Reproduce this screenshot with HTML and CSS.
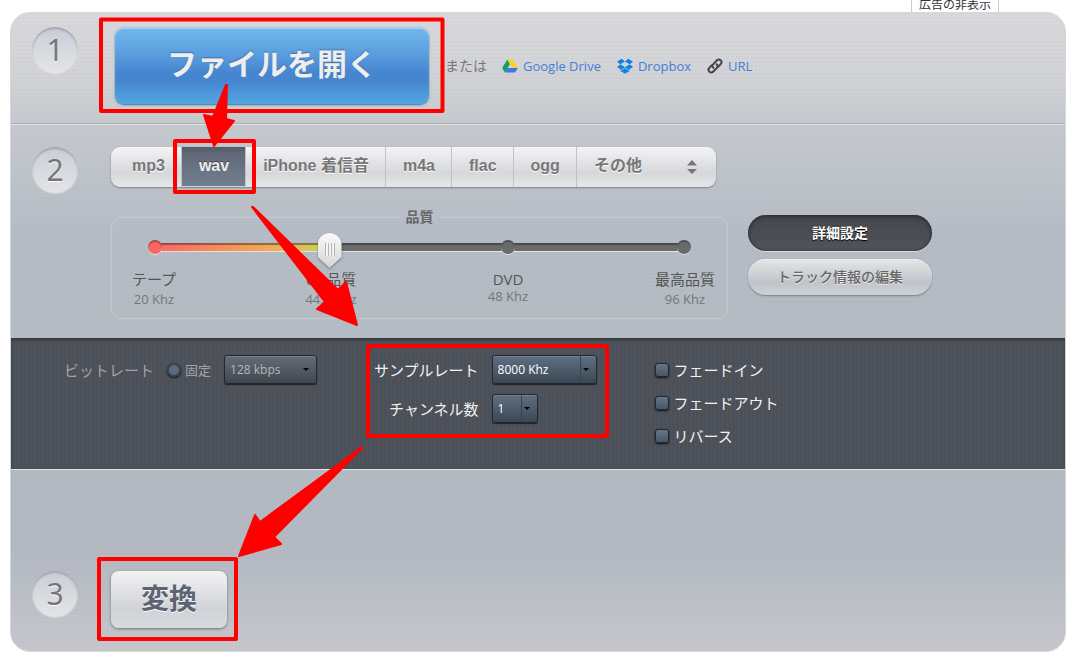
FILE: index.html
```html
<!DOCTYPE html>
<html lang="ja">
  <head>
    <meta charset="UTF-8" />
    <meta name="viewport" content="width=device-width, initial-scale=1.0" />
    <title>オーディオコンバーター</title>
    <link rel="stylesheet" href="styles.css">
  </head>

  <body>
    <header class="top">
      <a class="hide-ads" href="#">広告の非表示</a>
    </header>

    <main class="panel">
      <!-- Step 1: source file -->
      <section class="step step-open">
        <span class="number">1</span>
        <button class="open-btn" type="button">ファイルを開く</button>
        <span class="or">または</span>
        <nav class="sources">
          <a href="#">
            <svg width="16" height="16" viewBox="0 0 16 16">
              <path fill="#11a15b" d="M5.3 1.5 8 6 2.8 14.5.2 10z" />
              <path fill="#ffcf25" d="M5.3 1.5h5.4l5 8.5h-5.2z" />
              <path fill="#3b77e8" d="M5.4 10h10.4l-2.6 4.5H2.8z" />
            </svg>
            Google Drive
          </a>
          <a href="#">
            <svg width="16" height="16" viewBox="0 0 16 16" fill="#1081e2">
              <path d="M4.7.8 8 3.4 3.3 6.3 0 3.7zM11.3.8 16 3.7l-3.3 2.6L8 3.4zM0 8.9l3.3-2.6L8 9.2l-3.3 2.7zM12.7 6.3 16 8.9l-4.7 3L8 9.2zM8 10l3.3 2.7 1.4-.9v1.1L8 15.7l-4.7-2.8v-1.1l1.4.9z" />
            </svg>
            Dropbox
          </a>
          <a href="#">
            <svg width="16" height="16" viewBox="0 0 16 16" fill="none" stroke="#444" stroke-width="2" stroke-linecap="round">
              <path d="M6.4 9.8C5 8.6 5.3 7.1 6.3 6.1L9.7 2.5c2.6-2.5 6.4.9 4 3.700l-2.500 2.600" />
              <path d="M9.6 6.2c1.400 1.200 1.300 2.700.2 3.800l-3.500 3.500c-2.600 2.500-6.400-.9-4-3.700l2.500-2.600" />
            </svg>
            URL
          </a>
        </nav>
      </section>

      <!-- Step 2: format and quality -->
      <section class="step step-format">
        <span class="number">2</span>
        <div class="format">
          <div class="tabs">
            <button type="button">mp3</button>
            <button type="button" class="active">wav</button>
            <button type="button">iPhone 着信音</button>
            <button type="button">m4a</button>
            <button type="button">flac</button>
            <button type="button">ogg</button>
            <span class="more">
              <select aria-label="その他の形式">
                <option>その他</option>
              </select>
              <svg width="12" height="16" viewBox="0 0 12 16" fill="#777">
                <path d="M6 1l5 5.500H1zM6 15l5-5H1z" />
              </svg>
            </span>
          </div>

          <div class="options">
            <fieldset class="quality">
              <legend>品質</legend>
              <div class="slider">
                <div class="track"></div>
                <div class="dots">
                  <i class="dot dot-on"></i>
                  <i class="dot"></i>
                  <i class="dot"></i>
                  <i class="dot"></i>
                </div>
                <input type="range" min="0" max="100" value="33" aria-label="品質" />
              </div>
              <div class="marks">
                <div>テープ<small>20 Khz</small></div>
                <div>CD品質<small>44.1 Khz</small></div>
                <div class="short">DVD<small>48 Khz</small></div>
                <div>最高品質<small>96 Khz</small></div>
              </div>
            </fieldset>
            <div class="side">
              <button type="button" class="pill pill-on">詳細設定</button>
              <button type="button" class="pill">トラック情報の編集</button>
            </div>
          </div>
        </div>
      </section>

      <!-- Advanced settings -->
      <section class="advanced">
        <div class="bitrate">
          <span class="caption">ビットレート</span>
          <label class="fixed"><input type="radio" name="bitrate" disabled />固定</label>
          <span class="dropdown dropdown-off">
            <select aria-label="ビットレート" disabled>
              <option>128 kbps</option>
            </select>
          </span>
        </div>
        <div class="sampling">
          <label for="rate">サンプルレート</label>
          <span class="dropdown dropdown-wide">
            <select id="rate">
              <option>8000 Khz</option>
            </select>
          </span>
          <label for="channels">チャンネル数</label>
          <span class="dropdown dropdown-small">
            <select id="channels">
              <option>1</option>
            </select>
          </span>
        </div>
        <div class="effects">
          <label><input type="checkbox" />フェードイン</label>
          <label><input type="checkbox" />フェードアウト</label>
          <label><input type="checkbox" />リバース</label>
        </div>
      </section>

      <!-- Step 3: convert -->
      <section class="step step-convert">
        <span class="number">3</span>
        <button class="convert-btn" type="button">変換</button>
      </section>
    </main>

    <!-- Red guide frames and arrows -->
    <svg class="guide" width="1074" height="658" viewBox="0 0 1074 658">
      <g fill="none" stroke="#f00" stroke-width="4" stroke-linejoin="round">
        <rect x="101" y="19.5" width="341.5" height="91.5" />
        <rect x="175" y="141" width="79" height="51" />
        <rect x="368" y="346" width="239" height="90" />
        <rect x="99" y="559" width="137" height="80" />
      </g>
      <g fill="#f00" stroke="#f00" stroke-width="2" stroke-linejoin="round">
        <path d="M226 85l1 0-1 34 8 2-20 25-10-31 9 2z" />
        <path d="M252 207l1 0 85 83 8-8 11 43-40-16 8-7z" />
        <path d="M362 447l0 1-88 89 7 7-42 12 16-41 5 7z" />
      </g>
    </svg>
  </body>
</html>
```

FILE: styles.css
```css
*,
*::before,
*::after {
  box-sizing: border-box;
}

body {
  position: relative;
  margin: 0;
  background: #fff;
  color: #555;
  font-family: "Open Sans", "Noto Sans CJK JP", sans-serif;
  font-size: 15px;
}

button,
select,
input {
  margin: 0;
  font: inherit;
  cursor: pointer;
}

a {
  text-decoration: none;
}

.top {
  display: flex;
  justify-content: flex-end;
  align-items: flex-end;
  height: 12px;
  padding-right: 75px;
}

.hide-ads {
  padding: 0 7px;
  border: 1px solid #ccc;
  border-bottom: none;
  color: #333;
  font-size: 12px;
  line-height: 14px;
}

.panel {
  margin: 0 8px 6px 10px;
  border: 1px solid #d5d7da;
  border-radius: 20px;
  overflow: hidden;
  background:
    radial-gradient(circle at 1px 1px, rgba(80, 90, 110, 0.03) 1px, transparent 1px) 0 0 / 4px 4px,
    linear-gradient(#d9d9db 0, #d2d3d6 60px, #c5c9ce 115px, #b6bcc5 220px, #b3bbc2 400px, #b4b9c2 540px, #c5c7cb 100%);
}

.step {
  display: flex;
  align-items: flex-start;
  padding: 0 21px;
}

.number {
  flex: none;
  width: 46px;
  height: 46px;
  margin-right: 33px;
  border-radius: 50%;
  background: linear-gradient(#c9cdd6, #e4e5e7);
  box-shadow: inset 0 2px 2px rgba(90, 95, 105, 0.35), 0 1px 0 rgba(255, 255, 255, 0.4);
  color: #777;
  font-family: "Noto Sans", sans-serif;
  font-size: 30px;
  line-height: 46px;
  text-align: center;
  text-shadow: 0 1px 0 #fff;
}

/* step 1 */
.step-open {
  padding-top: 14px;
  padding-bottom: 19px;
  border-bottom: 1px solid #a9adb1;
}

.open-btn {
  width: 314px;
  height: 77px;
  margin-left: 4px;
  padding: 0 6px 8px;
  border: none;
  border-radius: 9px;
  background: linear-gradient(#72b8ec, #589bdd 38%, #4685d0 60%, #4685d0 70%, #53a6e0);
  box-shadow: inset 0 2px 1px rgba(255, 255, 255, 0.35), 0 1px 2px #3b6ea8;
  color: #eee;
  font-size: 30px;
  font-weight: bold;
  text-shadow: 0 -1px 1px #4a6f9c;
}

.or,
.sources {
  align-self: center;
}

.or {
  margin: 0 15px 0 16px;
  color: #777;
  font-size: 14px;
  line-height: 16px;
}

.sources {
  display: flex;
  gap: 16px;
  font-size: 13px;
}

.sources a {
  display: flex;
  align-items: center;
  gap: 5px;
  color: #4380d3;
}

/* step 2 */
.step-format {
  padding-top: 22px;
  padding-bottom: 19px;
  border-top: 1px solid #e2e4e7;
}

.format {
  flex: 1;
}

.tabs {
  display: flex;
  width: 605px;
  height: 40px;
  border-radius: 9px;
  overflow: hidden;
  background: linear-gradient(#f4f4f5, #d6d7da 65%, #e6e7e9);
  box-shadow: 0 1px 2px #7d8289;
  color: #777;
  font-family: "Liberation Sans", "Noto Sans CJK JP", sans-serif;
  font-size: 16px;
  font-weight: bold;
}

.tabs button {
  padding: 0 16px 3px 17px;
  border: none;
  border-right: 1px solid #bfc1c5;
  background: none;
  color: inherit;
  line-height: 20px;
  white-space: nowrap;
  text-shadow: 0 1px 0 #fff;
}

.tabs button:first-child {
  padding-left: 21px;
}

.tabs .active {
  background: linear-gradient(#555c68, #626978 20%, #728092);
  box-shadow: inset 0 -1px 0 #d0d4d8;
  color: #eee;
  text-shadow: 0 -1px 0 #444;
}

.more {
  display: flex;
  flex: 1;
  align-items: center;
  padding-right: 18px;
}

.more select {
  flex: 1;
  height: 40px;
  padding: 0 17px 4px;
  border: none;
  appearance: none;
  background: none;
  color: inherit;
  text-shadow: 0 1px 0 #fff;
}

.options {
  display: flex;
  margin-top: 21px;
}

.quality {
  flex: 0 1 617px;
  height: 111px;
  min-width: 0;
  margin: 0;
  padding: 3px 2px 0;
  border: 1px solid #c6cacf;
  border-radius: 10px;
}

.quality legend {
  margin: 0 auto;
  padding: 0 6px;
  color: #666;
  font-size: 14px;
  font-weight: bold;
  line-height: 18px;
}

.slider {
  position: relative;
  height: 40px;
  margin: 0 29px;
  padding: 14px 12px 0;
}

.track {
  height: 8px;
  background: linear-gradient(to right, #fb6860, #f5a556 20%, #cdd559 33%, #6b6b6b 33%);
  box-shadow: inset 0 2px 1px rgba(40, 40, 40, 0.5), 0 1px 0 #dfe1e3;
}

.dots {
  position: absolute;
  top: 11px;
  right: 5px;
  left: 5px;
  display: flex;
  justify-content: space-between;
}

.dot {
  width: 14px;
  height: 14px;
  border-radius: 50%;
  background: #6b6b6b;
  box-shadow: inset 0 2px 1px rgba(40, 40, 40, 0.4), 0 1px 0 #dfe1e3;
}

.dot-on {
  background: #fc6561;
}

.slider input {
  position: absolute;
  top: 4px;
  left: 0;
  width: 100%;
  height: 35px;
  appearance: none;
  background: none;
  filter: drop-shadow(0 1px 1px rgba(0, 0, 0, 0.4));
}

.slider input::-webkit-slider-thumb {
  appearance: none;
  width: 24px;
  height: 35px;
  background:
    repeating-linear-gradient(to right, #b5b5b5 0, #b5b5b5 1px, #f4f4f4 1px, #f4f4f4 3px) 7px 10px / 10px 13px no-repeat,
    linear-gradient(#fafafa, #d5d5d5);
  clip-path: path("M0 12a12 12 0 0 1 24 0v12L12 35 0 24z");
}

.marks {
  display: flex;
  justify-content: space-between;
  line-height: 20px;
  text-align: center;
}

.marks div {
  width: 80px;
}

.marks small {
  display: block;
  color: #777;
  font-size: 13px;
}

.marks .short small {
  line-height: 14px;
}

.side {
  display: flex;
  flex-direction: column;
  gap: 8px;
  padding-top: 7px;
  margin-left: 20px;
}

.pill {
  width: 184px;
  height: 36px;
  padding: 0 0 3px;
  border: none;
  border-radius: 18px;
  background: linear-gradient(#e5e6e7, #c0c4ca 65%, #ced1d4);
  box-shadow: 0 1px 2px #767b82, inset 0 1px 0 #eee;
  color: #666;
  font-size: 14px;
  font-weight: 500;
  text-shadow: 0 1px 0 #eee;
}

.pill-on {
  background: linear-gradient(#44474c, #50545b);
  box-shadow: inset 0 1px 4px #222, 0 1px 0 #d5d8dc;
  color: #fff;
  font-weight: bold;
  text-shadow: 0 1px 1px #000;
}

/* advanced settings */
.advanced {
  display: flex;
  align-items: flex-start;
  min-height: 131px;
  padding: 17px 54px 0 53px;
  background:
    repeating-linear-gradient(to right, rgba(255, 255, 255, 0.025) 0, rgba(255, 255, 255, 0.025) 1px, transparent 1px, transparent 4px),
    #4c5058;
  box-shadow: inset 0 2px 3px #35383d;
  color: #f2f2f2;
}

.bitrate {
  display: flex;
  align-items: center;
  margin-right: 57px;
  color: #a0a2a5;
}

.fixed {
  display: flex;
  align-items: center;
  gap: 4px;
  margin: 0 13px;
  font-size: 13px;
}

.fixed input {
  appearance: none;
  width: 14px;
  height: 14px;
  border: 2px solid #3b4552;
  border-radius: 50%;
  background: #5b6b7d;
  box-shadow: 0 1px 2px #111;
}

.dropdown {
  position: relative;
  width: 93px;
  height: 29px;
}

.dropdown select {
  display: block;
  width: 100%;
  height: 100%;
  padding: 0 5px;
  border: 1px solid #23272d;
  border-radius: 3px;
  appearance: none;
  background: linear-gradient(#5f7083, #3b4754);
  box-shadow: inset 0 1px 0 #76828f, 0 1px 1px #1e2125;
  color: #fff;
  font-size: 12px;
  opacity: 1;
}

.dropdown::before {
  content: "";
  position: absolute;
  top: 1px;
  right: 16px;
  bottom: 1px;
  border-left: 1px solid #39424d;
}

.dropdown::after {
  content: "";
  position: absolute;
  top: 13px;
  right: 8px;
  border: 3px solid transparent;
  border-top-color: #000;
}

.dropdown-off::before {
  display: none;
}

.dropdown-off select {
  background: linear-gradient(#656c76, #41474f);
  color: #b5b8bc;
}

.dropdown-wide {
  width: 105px;
}

.dropdown-small {
  width: 46px;
}

.sampling {
  display: grid;
  grid-template-columns: auto auto;
  align-items: center;
  gap: 10px 13px;
  margin-right: 58px;
}

.sampling label {
  text-align: right;
}

.effects {
  display: flex;
  flex-direction: column;
  gap: 11px;
  padding-top: 4px;
}

.effects label {
  display: flex;
  align-items: center;
  gap: 5px;
  line-height: 22px;
}

.effects input {
  appearance: none;
  width: 14px;
  height: 14px;
  border: 1px solid #23272d;
  border-radius: 3px;
  background: linear-gradient(#63768a, #485665);
  box-shadow: 0 1px 2px #111;
}

/* step 3 */
.step-convert {
  padding-top: 101px;
  padding-bottom: 23px;
  border-top: 1px solid #e2e4e7;
}

.convert-btn {
  width: 116px;
  height: 57px;
  padding: 0 0 6px;
  border: none;
  border-radius: 8px;
  background: linear-gradient(#f2f2f3, #cfd2d7 68%, #d9dbde);
  box-shadow: 0 1px 3px #6d7279;
  color: #5b6470;
  font-size: 28px;
  font-weight: bold;
  text-shadow: 0 1px 0 #fff;
}

.guide {
  position: absolute;
  top: 0;
  left: 0;
  pointer-events: none;
}
```
